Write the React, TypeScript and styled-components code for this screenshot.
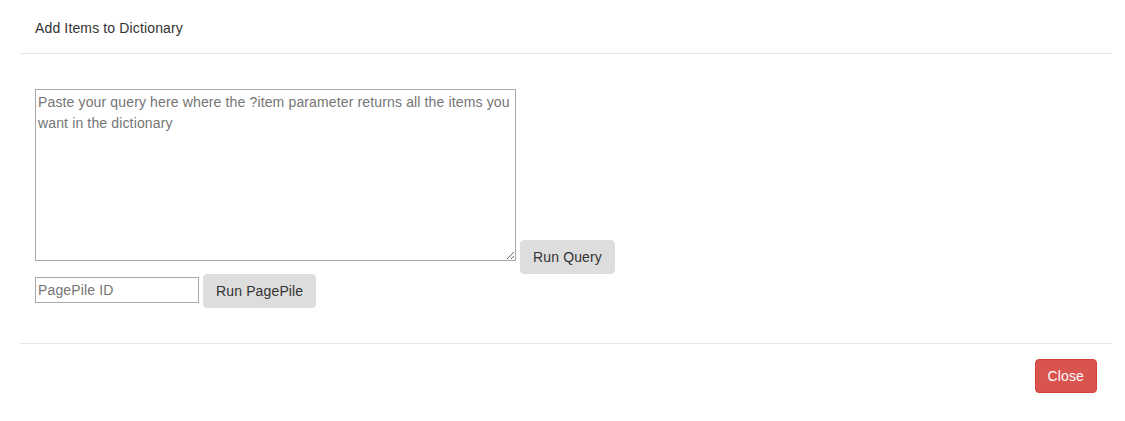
import React from "react";
import styled, { createGlobalStyle } from "styled-components";

const Global = createGlobalStyle`
  html, body { margin: 0; padding: 0; background: #fff; }
  body {
    font-family: "Liberation Sans", Arial, Helvetica, sans-serif;
    font-size: 14px;
    line-height: 1.42857;
    letter-spacing: 0.14px;
    color: #333;
  }
  * { box-sizing: border-box; }
`;

const Modal = styled.div`
  margin: 0 13px 0 20px;
  background: #fff;
`;

const Header = styled.div`
  padding: 18px 15px 15px;
  border-bottom: 1px solid #e5e5e5;
`;

const Title = styled.h4`
  margin: 0;
  font-size: 14px;
  font-weight: normal;
  line-height: 20px;
  color: #333;
`;

const Body = styled.div`
  padding: 35px 15px 35px;
  display: flex;
  flex-direction: column;
`;

const Row = styled.div<{ $align: string }>`
  display: flex;
  align-items: ${(p) => p.$align};
  gap: 4px;
`;

const QueryArea = styled.textarea`
  width: 481px;
  height: 172px;
  margin: 0 0 13px;
  padding: 2px;
  border: 1px solid #a9a9a9;
  font-family: "Liberation Sans", Arial, sans-serif;
  font-size: 14px;
  line-height: 21px;
  letter-spacing: 0.14px;
  color: #333;
  resize: both;
  &::placeholder { color: #757575; }
`;

const IdInput = styled.input`
  width: 164px;
  height: 26px;
  margin-top: 3px;
  padding: 1px 2px;
  border: 1px solid #a9a9a9;
  font-family: "Liberation Sans", Arial, sans-serif;
  font-size: 14px;
  letter-spacing: 0.14px;
  color: #333;
  &::placeholder { color: #757575; }
`;

const Button = styled.button<{ $danger?: boolean }>`
  height: 34px;
  padding: 6px 12px;
  font-family: "Liberation Sans", Arial, sans-serif;
  font-size: 14px;
  line-height: 20px;
  letter-spacing: 0.14px;
  border-radius: 4px;
  cursor: pointer;
  border: 1px solid ${(p) => (p.$danger ? "#d43f3a" : "#dddddd")};
  background: ${(p) => (p.$danger ? "#d9534f" : "#dddddd")};
  color: ${(p) => (p.$danger ? "#fff" : "#333")};
`;

const Footer = styled.div`
  padding: 15px;
  border-top: 1px solid #e5e5e5;
  display: flex;
  justify-content: flex-end;
`;

export default function App() {
  return (
    <>
      <Global />
      <Modal>
        <Header>
          <Title>Add Items to Dictionary</Title>
        </Header>
        <Body>
          <Row $align="flex-end">
            <QueryArea placeholder="Paste your query here where the ?item parameter returns all the items you want in the dictionary" />
            <Button>Run Query</Button>
          </Row>
          <Row $align="flex-start">
            <IdInput placeholder="PagePile ID" />
            <Button>Run PagePile</Button>
          </Row>
        </Body>
        <Footer>
          <Button $danger>Close</Button>
        </Footer>
      </Modal>
    </>
  );
}
